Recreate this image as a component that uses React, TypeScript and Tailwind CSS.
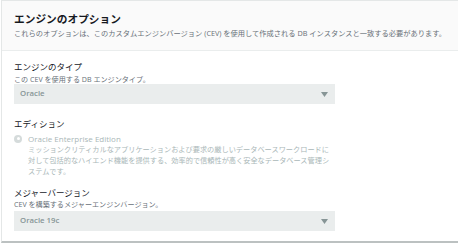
import React from "react";

const font = { fontFamily: '"Open Sans", "Noto Sans CJK JP", sans-serif' };

function Select({ value }: { value: string }) {
  return (
    <div className="flex h-[20px] w-[321px] items-center justify-between bg-[#eaeded] pl-[6px] pr-[7px]">
      <span className="text-[7.8px] font-semibold text-[#879596]">{value}</span>
      <svg width="7" height="5" viewBox="0 0 7 5">
        <path d="M0 0 L7 0 L3.5 5 Z" fill="#879596" />
      </svg>
    </div>
  );
}

export default function App() {
  return (
    <div className="h-[244px] w-[458px] bg-white" style={font}>
      <div className="ml-[1px] h-[243px] border-b-2 border-l border-t border-[#e4e7e7] border-b-[#bcc1c1] bg-white">
        <div className="h-[50px] border-b border-[#eaeded] bg-[#fafafa] pl-[12px] pt-[11px]">
          <div className="whitespace-nowrap text-[10.7px] font-bold leading-[14px] text-[#16191f]">エンジンのオプション</div>
          <div className="mt-[2px] whitespace-nowrap text-[7.25px] leading-[10px] text-[#687078]">
            これらのオプションは、このカスタムエンジンバージョン (CEV) を使用して作成される DB インスタンスと一致する必要があります。
          </div>
        </div>
        <div className="pl-[12px] pt-[10px]">
          <div className="text-[8.5px] leading-[12px] text-[#16191f]">エンジンのタイプ</div>
          <div className="mt-[1px] text-[7.1px] leading-[10px] text-[#687078]">この CEV を使用する DB エンジンタイプ。</div>
          <Select value="Oracle" />
          <div className="mt-[14px] text-[8.5px] leading-[12px] text-[#16191f]">エディション</div>
          <div className="mt-[3px] flex items-start gap-[6px]">
            <div className="mt-[1.5px] flex h-[8px] w-[8px] shrink-0 items-center justify-center rounded-full bg-[#d5dbdb]">
              <div className="h-[3px] w-[3px] rounded-full bg-white" />
            </div>
            <div className="w-[304px]">
              <div className="text-[8px] leading-[11px] text-[#aab7b8]">Oracle Enterprise Edition</div>
              <div className="text-[7.2px] leading-[11px] text-[#aab7b8]">
                ミッションクリティカルなアプリケーションおよび要求の厳しいデータベースワークロードに対して包括的なハイエンド機能を提供する、効率的で信頼性が高く安全なデータベース管理システムです。
              </div>
            </div>
          </div>
          <div className="mt-[10px] text-[8.5px] leading-[12px] text-[#16191f]">メジャーバージョン</div>
          <div className="text-[7.1px] leading-[10px] text-[#687078]">CEV を構築するメジャーエンジンバージョン。</div>
          <div className="mt-[2px]">
            <Select value="Oracle 19c" />
          </div>
        </div>
      </div>
    </div>
  );
}
